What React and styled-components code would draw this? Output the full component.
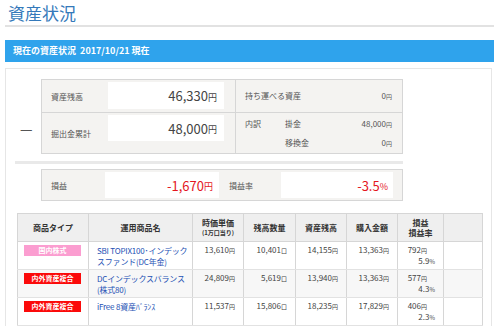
import React from "react";
import styled, { createGlobalStyle } from "styled-components";

const Global = createGlobalStyle`
  html, body { margin: 0; padding: 0; background: #fff; }
  body { font-family: "Noto Sans CJK JP", "Noto Sans", sans-serif; color: #444; }
  * { box-sizing: border-box; }
`;

const Page = styled.div`
  padding: 0 6px 0 5px;
  width: 500px;
`;

const Title = styled.h1`
  margin: 0;
  height: 27px;
  padding: 3px 0 0 3px;
  font-size: 17px;
  line-height: 20px;
  font-weight: 400;
  color: #3479ba;
  border-bottom: 2px solid #e2e2e2;
`;

const Bar = styled.div`
  margin-top: 13px;
  height: 22px;
  background: #2fa3ec;
  color: #fff;
  font-size: 9px;
  font-weight: 700;
  line-height: 22px;
  padding-left: 8px;
  white-space: pre;
`;

const Panel = styled.div`
  margin-top: 6px;
  border-top: 1px solid #e6e6e6;
  border-left: 1px solid #e6e6e6;
  border-right: 1px solid #e6e6e6;
  width: 487px;
  padding: 10px 0 0 9px;
`;

const Summary = styled.div`
  width: 388px;
  display: flex;
  padding-bottom: 7px;
  border-bottom: 3px solid #e9e9e9;
`;

const Dash = styled.div`
  width: 26px;
  padding: 42px 0 0 5px;
  font-size: 14px;
  color: #555;
  line-height: 14px;
`;

const GreyBox = styled.div`
  flex: 1;
  background: #f4f3f1;
  border: 1px solid #d6d6d6;
  display: grid;
  grid-template-columns: ${(p) => p.$cols};
  font-size: 8px;
  color: #555;
`;

const Label = styled.div`
  display: flex;
  align-items: center;
  padding-left: ${(p) => p.$pad || 9}px;
  border-top: ${(p) => (p.$top ? "1px solid #d6d6d6" : "none")};
`;

const ValueCell = styled.div`
  padding: ${(p) => p.$pad || "2px 11px 3px 0"};
  border-top: ${(p) => (p.$top ? "1px solid #d6d6d6" : "none")};
  border-right: ${(p) => (p.$divider ? "1px solid #d6d6d6" : "none")};
`;

const WhiteBox = styled.div`
  background: #fff;
  height: ${(p) => p.$h || 27}px;
  display: flex;
  align-items: center;
  justify-content: flex-end;
  padding-right: ${(p) => p.$pr || 7}px;
  color: ${(p) => (p.$red ? "#e4161e" : "#444")};
  font-size: 13px;
`;

const Unit = styled.span`
  font-size: 9px;
  margin-top: 3px;
`;

const RightCell = styled.div`
  display: grid;
  grid-template-columns: 40px 1fr auto;
  align-content: ${(p) => (p.$center ? "center" : "start")};
  padding: ${(p) => (p.$center ? "0 10px 0 9px" : "2px 10px 0 9px")};
  line-height: 18px;
  border-top: ${(p) => (p.$top ? "1px solid #d6d6d6" : "none")};
`;

const Wide = styled.span`
  grid-column: 1 / 3;
`;

const Amount = styled.span`
  text-align: right;
  font-size: 8px;
`;

const SmallUnit = styled.span`
  font-size: 6px;
`;

const ProfitRow = styled.div`
  margin: 5px 0 0 26px;
  width: 362px;
  display: flex;
  height: 32px;
`;

const DataTable = styled.table`
  margin: 12px 0 0 2px;
  width: 465px;
  border-collapse: collapse;
  table-layout: fixed;
  border: 1px solid #cfcfcf;
  font-size: 8px;
`;

const Th = styled.th`
  background: #efefef;
  border: 1px solid #d6d6d6;
  height: 28px;
  font-weight: 700;
  color: #333;
  line-height: 10px;
  padding: 0;
`;

const Sub = styled.div`
  font-size: 6px;
  line-height: 9px;
`;

const Tr = styled.tr`
  background: ${(p) => (p.$alt ? "#f7f7f7" : "#fff")};
`;

const Td = styled.td`
  border-left: 1px solid #d6d6d6;
  border-right: 1px solid #d6d6d6;
  border-bottom: 1px solid #e2e2e2;
  vertical-align: top;
  height: 28px;
  padding: ${(p) => (p.$badge ? "3px 0 0 6px" : "3px 8px 0 8px")};
  text-align: ${(p) => (p.$left ? "left" : "right")};
  line-height: 10px;
  color: #444;
  white-space: nowrap;
  overflow: hidden;
`;

const Badge = styled.div`
  width: 57px;
  height: 11px;
  background: ${(p) => (p.$pink ? "#fb9dd0" : "#fb0a0a")};
  color: #fff;
  font-size: 7px;
  font-weight: 700;
  line-height: 11px;
  text-align: center;
`;

const Fund = styled.span`
  display: block;
  color: #2350b4;
  font-size: 8px;
  line-height: 11px;
  letter-spacing: -0.2px;
  white-space: nowrap;
`;

const First = styled.span`
  margin-right: 8px;
`;

const rows = [
  { type: "国内株式", pink: true, name: ["SBI TOPIX100･インデック", "スファンド(DC年金)"], price: "13,610", qty: "10,401", bal: "14,155", buy: "13,363", pl: "792", rate: "5.9" },
  { type: "内外資産複合", name: ["DCインデックスバランス", "(株式80)"], price: "24,809", qty: "5,619", bal: "13,940", buy: "13,363", pl: "577", rate: "4.3", alt: true },
  { type: "内外資産複合", name: ["iFree 8資産ﾊﾞﾗﾝｽ"], price: "11,537", qty: "15,806", bal: "18,235", buy: "17,829", pl: "406", rate: "2.3" },
];

const Yen = () => <SmallUnit>円</SmallUnit>;

export default function App() {
  return (
    <Page>
      <Global />
      <Title>資産状況</Title>
      <Bar>{"現在の資産状況  2017/10/21 現在"}</Bar>
      <Panel>
        <Summary>
          <Dash>—</Dash>
          <GreyBox $cols="66px 128px 1fr">
            <Label>資産残高</Label>
            <ValueCell $divider>
              <WhiteBox>46,330<Unit>円</Unit></WhiteBox>
            </ValueCell>
            <RightCell $center>
              <Wide>持ち運べる資産</Wide>
              <Amount>0<Yen /></Amount>
            </RightCell>
            <Label $top>掘出金累計</Label>
            <ValueCell $top $divider $pad="2px 11px 9px 0">
              <WhiteBox $h={26}>48,000<Unit>円</Unit></WhiteBox>
            </ValueCell>
            <RightCell $top>
              <span>内訳</span>
              <span>掛金</span>
              <Amount>48,000<Yen /></Amount>
              <span></span>
              <span>移換金</span>
              <Amount>0<Yen /></Amount>
            </RightCell>
          </GreyBox>
        </Summary>
        <ProfitRow>
          <GreyBox $cols="63px 114px 62px 112px 1fr">
            <Label>損益</Label>
            <ValueCell $pad="2px 0 3px 0">
              <WhiteBox $h={26} $red $pr={6}>-1,670<Unit>円</Unit></WhiteBox>
            </ValueCell>
            <Label $pad={10}>損益率</Label>
            <ValueCell $pad="2px 0 3px 0">
              <WhiteBox $h={26} $red $pr={5}>-3.5<Unit>%</Unit></WhiteBox>
            </ValueCell>
            <div />
          </GreyBox>
        </ProfitRow>
        <DataTable>
          <colgroup>
            <col style={{ width: 71 }} />
            <col style={{ width: 104 }} />
            <col style={{ width: 51 }} />
            <col style={{ width: 52 }} />
            <col style={{ width: 51 }} />
            <col style={{ width: 51 }} />
            <col style={{ width: 46 }} />
            <col style={{ width: 39 }} />
          </colgroup>
          <thead>
            <tr>
              <Th>商品タイプ</Th>
              <Th>運用商品名</Th>
              <Th>時価単価<Sub>(1万口当り)</Sub></Th>
              <Th>残高数量</Th>
              <Th>資産残高</Th>
              <Th>購入金額</Th>
              <Th>損益<br />損益率</Th>
              <Th />
            </tr>
          </thead>
          <tbody>
            {rows.map((r, i) => (
              <Tr key={i} $alt={r.alt}>
                <Td $badge $left><Badge $pink={r.pink}>{r.type}</Badge></Td>
                <Td $left>
                  {r.name.map((n, j) => <Fund key={j}>{n}</Fund>)}
                </Td>
                <Td>{r.price}<Yen /></Td>
                <Td>{r.qty}<SmallUnit>口</SmallUnit></Td>
                <Td>{r.bal}<Yen /></Td>
                <Td>{r.buy}<Yen /></Td>
                <Td><First>{r.pl}<Yen /></First><br />{r.rate}<SmallUnit>%</SmallUnit></Td>
                <Td />
              </Tr>
            ))}
          </tbody>
        </DataTable>
      </Panel>
    </Page>
  );
}
